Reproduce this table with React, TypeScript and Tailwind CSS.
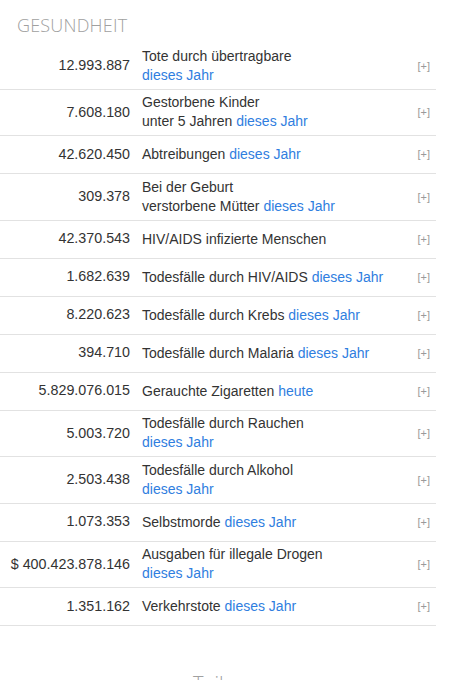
import React from "react";

type Row = { n: string; a: string; b?: string; link: string; br?: boolean };

const rows: Row[] = [
  { n: "12.993.887", a: "Tote durch übertragbare", link: "dieses Jahr", br: true },
  { n: "7.608.180", a: "Gestorbene Kinder", b: "unter 5 Jahren", link: "dieses Jahr" },
  { n: "42.620.450", a: "Abtreibungen", link: "dieses Jahr" },
  { n: "309.378", a: "Bei der Geburt", b: "verstorbene Mütter", link: "dieses Jahr" },
  { n: "42.370.543", a: "HIV/AIDS infizierte Menschen", link: "" },
  { n: "1.682.639", a: "Todesfälle durch HIV/AIDS", link: "dieses Jahr" },
  { n: "8.220.623", a: "Todesfälle durch Krebs", link: "dieses Jahr" },
  { n: "394.710", a: "Todesfälle durch Malaria", link: "dieses Jahr" },
  { n: "5.829.076.015", a: "Gerauchte Zigaretten", link: "heute" },
  { n: "5.003.720", a: "Todesfälle durch Rauchen", link: "dieses Jahr", br: true },
  { n: "2.503.438", a: "Todesfälle durch Alkohol", link: "dieses Jahr", br: true },
  { n: "1.073.353", a: "Selbstmorde", link: "dieses Jahr" },
  { n: "$ 400.423.878.146", a: "Ausgaben für illegale Drogen", link: "dieses Jahr", br: true },
  { n: "1.351.162", a: "Verkehrstote", link: "dieses Jahr" },
];

export default function App() {
  return (
    <div className="w-[467px] h-[680px] overflow-hidden bg-white" style={{ fontFamily: '"Liberation Sans", Arial, sans-serif' }}>
      <div className="pl-[17px] pt-[12px] h-[43px] text-[#a0a0a0] text-[18px] tracking-[0.2px]" style={{ fontFamily: '"Open Sans", sans-serif', fontWeight: 300 }}>
        GESUNDHEIT
      </div>
      <div className="w-[436px]">
        {rows.map((r, i) => (
          <div key={i} className="flex items-center min-h-[38px] py-[3.75px] border-b border-[#e2e2e2]">
            <div className="w-[130px] shrink-0 text-right text-[14.3px] text-[#333]">{r.n}</div>
            <div className="flex-1 pl-[12px] text-[14px] leading-[19px] text-[#333]">
              {r.a}
              {r.b ? (
                <>
                  <br />
                  {r.b}
                </>
              ) : null}
              {r.br ? <br /> : r.link ? " " : null}
              {r.link ? <span className="text-[#2f7ee0]">{r.link}</span> : null}
            </div>
            <div className="w-[30px] shrink-0 pr-[6px] text-right text-[11px] text-[#9a9a9a]">[+]</div>
          </div>
        ))}
      </div>
      <div className="pt-[44px] pl-[193px] text-[#a0a0a0] text-[20px] leading-[28px]" style={{ fontFamily: '"Open Sans", sans-serif', fontWeight: 300 }}>
        Teilen
      </div>
    </div>
  );
}
